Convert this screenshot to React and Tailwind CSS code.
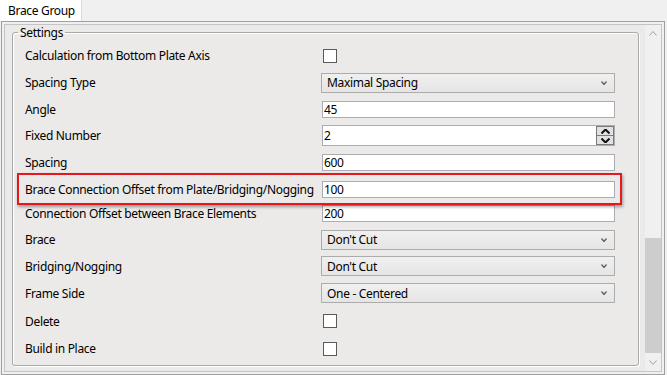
import React from "react";

function Chevron({ className = "", up = false, color = "#555", w = 7, h = 4, sw = 1.2 }) {
  return (
    <svg width={w} height={h} viewBox={`0 0 ${w} ${h}`} className={className}>
      {up ? (
        <polyline points={`0.5,${h - 0.5} ${w / 2},0.5 ${w - 0.5},${h - 0.5}`} fill="none" stroke={color} strokeWidth={sw} />
      ) : (
        <polyline points={`0.5,0.5 ${w / 2},${h - 0.5} ${w - 0.5},0.5`} fill="none" stroke={color} strokeWidth={sw} />
      )}
    </svg>
  );
}

function Checkbox() {
  return <div className="ml-[2px] w-[14px] h-[14px] border border-[#5a5a5a] bg-white" />;
}

function Combo({ value }) {
  return (
    <div className="w-[294px] h-[20px] border border-[#acacac] bg-gradient-to-b from-[#f0f0f0] to-[#e5e5e5] flex items-center justify-between pl-[5px] pr-[7px]">
      <span className="pt-[1px]">{value}</span>
      <Chevron w={6} h={4} color="#606060" sw={1.3} />
    </div>
  );
}

function TextInput({ value }) {
  return (
    <div className="ml-[1px] w-[293px] h-[17px] border border-[#abadb3] bg-white flex items-center px-[1px] pt-[1px]">
      {value}
    </div>
  );
}

function SpinInput({ value }) {
  return (
    <div className="ml-[1px] w-[293px] h-[21px] border border-[#abadb3] bg-white flex items-center">
      <span className="flex-1 px-[1px] pt-[1px]">{value}</span>
      <div className="w-[18px] h-[19px] flex flex-col border border-[#7a7a7a] bg-[#e1e1e1]">
        <div className="flex-1 flex items-center justify-center border-b border-[#7a7a7a]">
          <Chevron up w={9} h={5} color="#111" sw={2} />
        </div>
        <div className="flex-1 flex items-center justify-center">
          <Chevron w={9} h={5} color="#111" sw={2} />
        </div>
      </div>
    </div>
  );
}

function Row({ h, label, children }) {
  return (
    <div className={`flex items-center pl-[12px] ${h}`}>
      <div className="w-[296px] whitespace-nowrap pt-[1px]">{label}</div>
      {children}
    </div>
  );
}

export default function App() {
  return (
    <div className="w-[667px] h-[375px] bg-[#f0f0f0] font-['Noto_Sans',sans-serif] text-[12px] tracking-[-0.32px] leading-none text-black flex flex-col overflow-hidden">
      <div className="h-[21px] flex shrink-0">
        <div className="w-[82px] h-[21px] bg-white border-r border-[#d9d9d9] flex items-center pl-[8px] pt-[1px]">
          Brace Group
        </div>
      </div>
      <div className="ml-[1px] w-[664px] h-[354px] border border-[#a0a0a0] p-[2px] flex">
        <div className="flex-1 border border-[#c4c4c4] bg-[#ebeae8] flex">
          <div className="flex-1 pl-[7px] pr-[6px]">
            <fieldset className="h-[341px] border border-[#a9a9a9] rounded-[3px] shadow-[inset_1px_1px_0_#ffffff,1px_1px_0_#ffffff] pt-[2px]">
              <legend className="ml-[5px] px-[2px] leading-[15px]">Settings</legend>
              <Row h="h-[27px]" label="Calculation from Bottom Plate Axis">
                <Checkbox />
              </Row>
              <Row h="h-[27px]" label="Spacing Type">
                <Combo value="Maximal Spacing" />
              </Row>
              <Row h="h-[26px]" label="Angle">
                <TextInput value="45" />
              </Row>
              <Row h="h-[27px]" label="Fixed Number">
                <SpinInput value="2" />
              </Row>
              <Row h="h-[26px]" label="Spacing">
                <TextInput value="600" />
              </Row>
              <div className="relative z-10 ml-[4px] w-[605px] h-[32px] -mt-[2px] -mb-[5px] border-2 border-[#e8161d] shadow-[1px_2px_3px_rgba(0,0,0,0.35)] flex items-center pl-[6px]">
                <div className="w-[296px] whitespace-nowrap pt-[1px]">Brace Connection Offset from Plate/Bridging/Nogging</div>
                <TextInput value="100" />
              </div>
              <Row h="h-[26px]" label="Connection Offset between Brace Elements">
                <TextInput value="200" />
              </Row>
              <Row h="h-[27px]" label="Brace">
                <Combo value="Don't Cut" />
              </Row>
              <Row h="h-[26px]" label="Bridging/Nogging">
                <Combo value="Don't Cut" />
              </Row>
              <Row h="h-[28px]" label="Frame Side">
                <Combo value="One - Centered" />
              </Row>
              <Row h="h-[28px]" label="Delete">
                <Checkbox />
              </Row>
              <Row h="h-[27px]" label="Build in Place">
                <Checkbox />
              </Row>
            </fieldset>
          </div>
          <div className="w-[16px] bg-[#f0f0f0] flex flex-col">
            <div className="h-[17px] flex items-center justify-center">
              <Chevron up w={8} h={5} color="#a3a3a3" sw={1} />
            </div>
            <div className="flex-1">
              <div className="mt-[196px] h-[115px] bg-[#cdcdcd]" />
            </div>
            <div className="h-[17px] flex items-center justify-center">
              <Chevron w={8} h={5} color="#a3a3a3" sw={1} />
            </div>
          </div>
        </div>
      </div>
    </div>
  );
}
